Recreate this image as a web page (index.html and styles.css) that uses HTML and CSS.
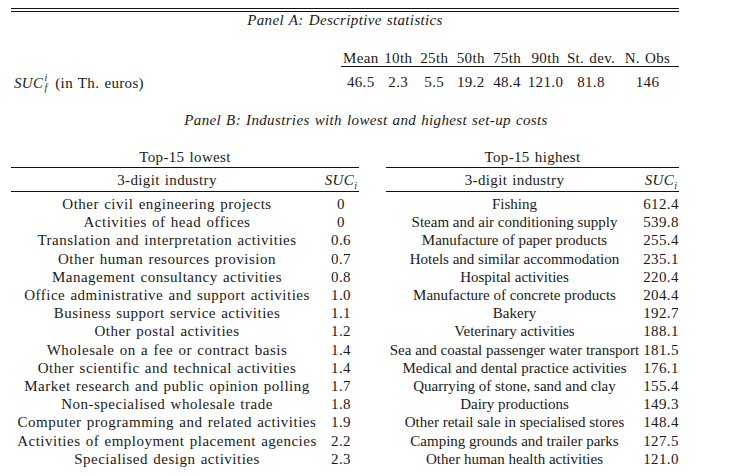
FILE: index.html
```html
<!DOCTYPE html>
<html>
<head>
<meta charset="utf-8">
<link rel="stylesheet" href="styles.css">
</head>
<body>
<div class="page">
  <div class="toprule"></div>
  <div class="panel-title a">Panel A: Descriptive statistics</div>
  <div class="stats">
    <div class="lab"></div>
    <div class="h">Mean</div><div class="h">10th</div><div class="h">25th</div><div class="h">50th</div><div class="h">75th</div><div class="h">90th</div><div class="h">St. dev.</div><div class="h">N. Obs</div>
    <div class="lab"><span class="suc"><i>SUC</i><span class="scripts"><i class="sup">i</i><i class="sub">f</i></span></span> (in Th. euros)</div>
    <div class="v">46.5</div><div class="v">2.3</div><div class="v">5.5</div><div class="v">19.2</div><div class="v">48.4</div><div class="v">121.0</div><div class="v">81.8</div><div class="v">146</div>
  </div>
  <div class="panel-title b">Panel B: Industries with lowest and highest set-up costs</div>
  <div class="tables">
    <table class="ind left">
      <colgroup><col class="c-ind"><col class="c-val"></colgroup>
      <thead>
        <tr class="cap"><th colspan="2">Top-15 lowest</th></tr>
        <tr class="hdr"><th>3-digit industry</th><th><i>SUC</i><sub><i>i</i></sub></th></tr>
      </thead>
      <tbody>
        <tr><td>Other civil engineering projects</td><td>0</td></tr>
        <tr><td>Activities of head offices</td><td>0</td></tr>
        <tr><td>Translation and interpretation activities</td><td>0.6</td></tr>
        <tr><td>Other human resources provision</td><td>0.7</td></tr>
        <tr><td>Management consultancy activities</td><td>0.8</td></tr>
        <tr><td>Office administrative and support activities</td><td>1.0</td></tr>
        <tr><td>Business support service activities</td><td>1.1</td></tr>
        <tr><td>Other postal activities</td><td>1.2</td></tr>
        <tr><td>Wholesale on a fee or contract basis</td><td>1.4</td></tr>
        <tr><td>Other scientific and technical activities</td><td>1.4</td></tr>
        <tr><td>Market research and public opinion polling</td><td>1.7</td></tr>
        <tr><td>Non-specialised wholesale trade</td><td>1.8</td></tr>
        <tr><td>Computer programming and related activities</td><td>1.9</td></tr>
        <tr><td>Activities of employment placement agencies</td><td>2.2</td></tr>
        <tr><td>Specialised design activities</td><td>2.3</td></tr>
      </tbody>
    </table>
    <table class="ind right">
      <colgroup><col class="c-ind"><col class="c-val"></colgroup>
      <thead>
        <tr class="cap"><th colspan="2">Top-15 highest</th></tr>
        <tr class="hdr"><th>3-digit industry</th><th><i>SUC</i><sub><i>i</i></sub></th></tr>
      </thead>
      <tbody>
        <tr><td>Fishing</td><td>612.4</td></tr>
        <tr><td>Steam and air conditioning supply</td><td>539.8</td></tr>
        <tr><td>Manufacture of paper products</td><td>255.4</td></tr>
        <tr><td>Hotels and similar accommodation</td><td>235.1</td></tr>
        <tr><td>Hospital activities</td><td>220.4</td></tr>
        <tr><td>Manufacture of concrete products</td><td>204.4</td></tr>
        <tr><td>Bakery</td><td>192.7</td></tr>
        <tr><td>Veterinary activities</td><td>188.1</td></tr>
        <tr><td>Sea and coastal passenger water transport</td><td>181.5</td></tr>
        <tr><td>Medical and dental practice activities</td><td>176.1</td></tr>
        <tr><td>Quarrying of stone, sand and clay</td><td>155.4</td></tr>
        <tr><td>Dairy productions</td><td>149.3</td></tr>
        <tr><td>Other retail sale in specialised stores</td><td>148.4</td></tr>
        <tr><td>Camping grounds and trailer parks</td><td>127.5</td></tr>
        <tr><td>Other human health activities</td><td>121.0</td></tr>
      </tbody>
    </table>
  </div>
</div>
</body>
</html>
```

FILE: styles.css
```css
html, body {
  margin: 0;
  padding: 0;
  background: #fff;
}
body {
  font-family: "Liberation Serif", "Times New Roman", serif;
  font-size: 15px;
  color: #1a1a1a;
  letter-spacing: 0.35px;
  word-spacing: 1px;
}
.page {
  width: 668px;
  margin-left: 11px;
  padding-top: 8px;
}
.toprule {
  height: 2px;
  border-top: 1px solid #111;
  border-bottom: 1px solid #111;
}
.panel-title {
  font-style: italic;
  text-align: center;
  line-height: 16px;
}
.stats {
  display: grid;
  grid-template-columns: 330px 39.5px 35.5px 36.5px 36.5px 36px 41px 50px 63px;
  margin-top: 22px;
}
.stats .h {
  text-align: center;
  line-height: 16px;
  border-bottom: 1px solid #111;
  white-space: nowrap;
}
.stats .v {
  text-align: center;
  line-height: 18px;
  padding-top: 6px;
}
.stats .lab {
  padding-left: 3px;
  line-height: 18px;
  padding-top: 6px;
  white-space: nowrap;
}
.suc {
  display: inline-flex;
  align-items: center;
}
.scripts {
  display: inline-flex;
  flex-direction: column;
  font-size: 10px;
  line-height: 10px;
  margin-left: 1px;
  margin-right: 3px;
  letter-spacing: 0;
}
.panel-title.b {
  margin-top: 19px;
  padding-left: 42px;
}
.tables {
  display: flex;
  gap: 27px;
  margin-top: 21px;
}
.ind {
  border-collapse: collapse;
  border-spacing: 0;
  flex-shrink: 0;
  table-layout: fixed;
}
.ind.left { width: 348px; letter-spacing: 0.5px; }
.ind.right { width: 293px; letter-spacing: 0; word-spacing: 0; }
.ind.left .c-ind { width: 312px; }
.ind.left .c-val { width: 36px; }
.ind.right .c-ind { width: 257px; }
.ind.right .c-val { width: 36px; }
.ind th {
  font-weight: normal;
  text-align: center;
  padding: 0;
  letter-spacing: 0.35px;
  word-spacing: 1px;
}
.ind .cap th {
  height: 18px;
  line-height: 16px;
  border-bottom: 1px solid #111;
  vertical-align: top;
}
.ind .hdr th {
  height: 23px;
  line-height: 16px;
  border-bottom: 1px solid #111;
  vertical-align: middle;
}
.ind .hdr sub {
  font-size: 10px;
  line-height: 0;
}
.ind td {
  padding: 0;
  height: 18.2px;
  line-height: 16px;
  text-align: center;
  white-space: nowrap;
}
.ind td + td {
  letter-spacing: 0.35px;
}
.ind tbody tr:first-child td {
  padding-top: 3px;
}
```
